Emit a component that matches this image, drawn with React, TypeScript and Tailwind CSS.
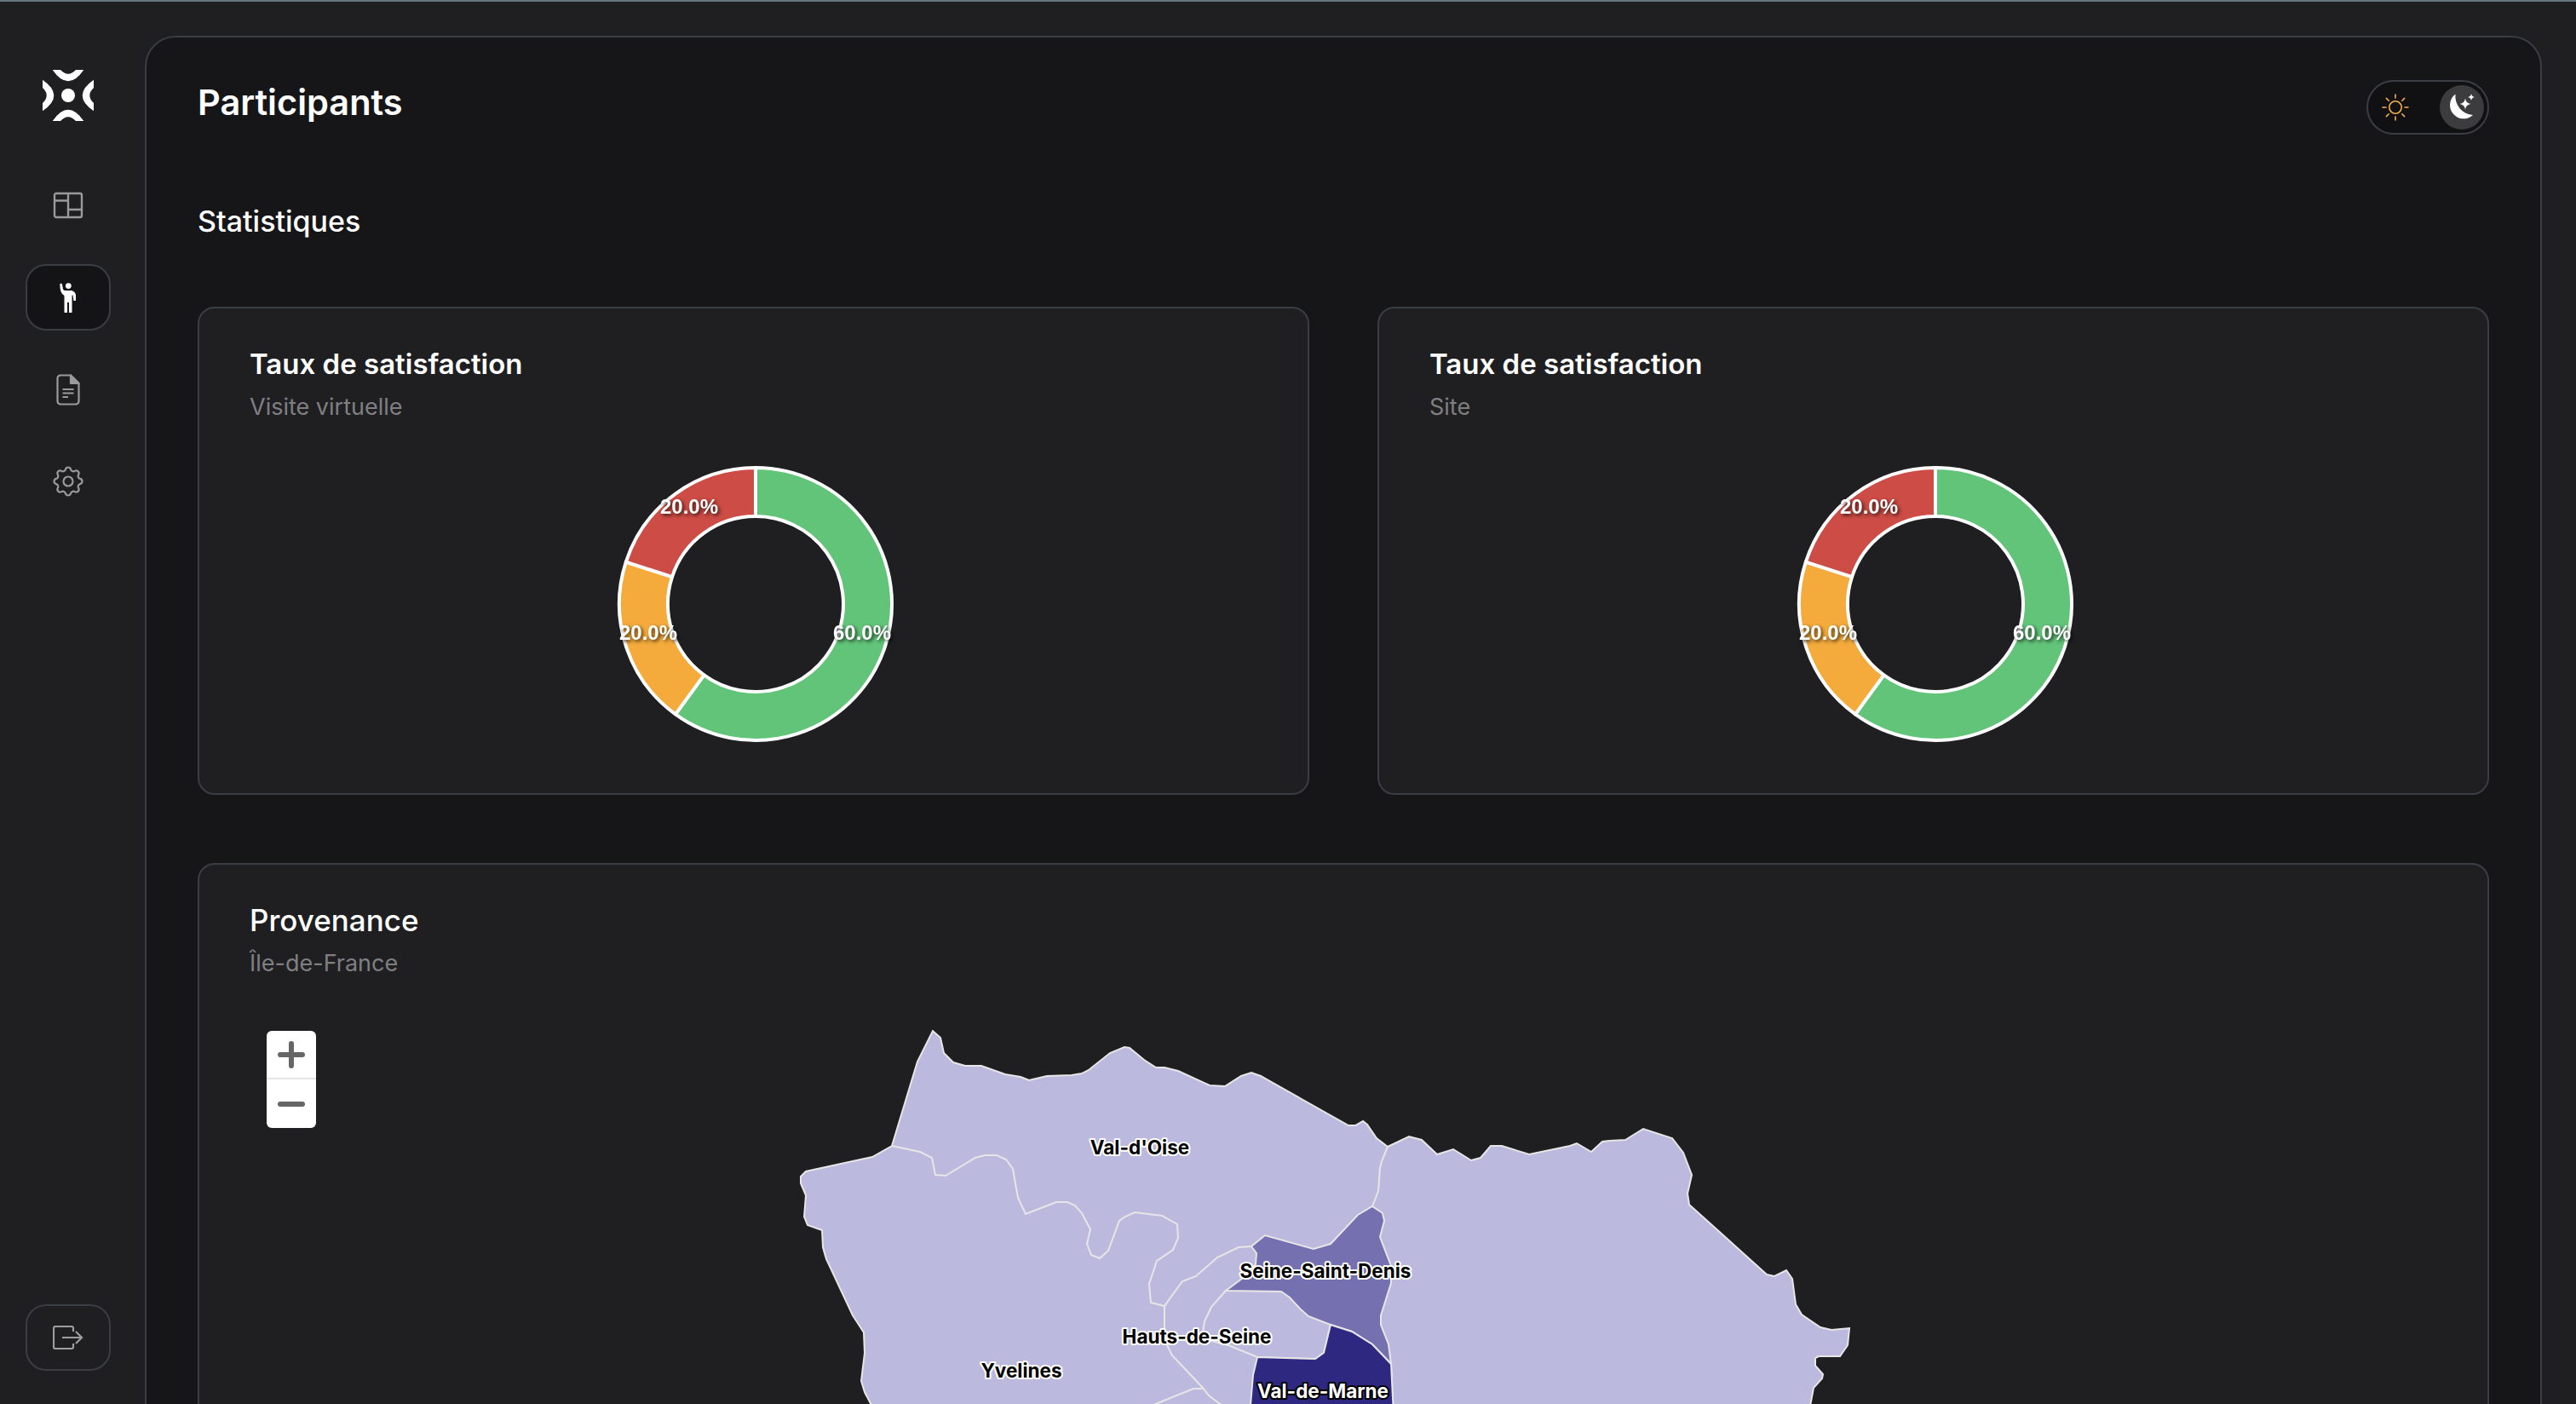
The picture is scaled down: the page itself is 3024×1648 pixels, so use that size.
import { TbSettings } from "react-icons/tb";

const segments = [
  { from: 0, to: 216, color: "#62c479" },
  { from: 216, to: 288, color: "#f4ab3c" },
  { from: 288, to: 360, color: "#cd4c45" },
];

const arcPoint = (r: number, deg: number) => {
  const a = (deg * Math.PI) / 180;
  return `${(170 + r * Math.sin(a)).toFixed(2)} ${(170 - r * Math.cos(a)).toFixed(2)}`;
};

const slicePath = (from: number, to: number) => {
  const large = to - from > 180 ? 1 : 0;
  return `M${arcPoint(160, from)} A160 160 0 ${large} 1 ${arcPoint(160, to)} L${arcPoint(103, to)} A103 103 0 ${large} 0 ${arcPoint(103, from)} Z`;
};

const Donut = () => (
  <svg width="340" height="340" viewBox="0 0 340 340" className="mx-auto block">
    {segments.map((s) => (
      <path key={s.from} d={slicePath(s.from, s.to)} fill={s.color} stroke="#ffffff" strokeWidth="4" strokeLinejoin="round" />
    ))}
    {[
      { x: 92, y: 55, t: "20.0%" },
      { x: 44, y: 203, t: "20.0%" },
      { x: 295, y: 203, t: "60.0%" },
    ].map((l) => (
      <text
        key={l.x}
        x={l.x}
        y={l.y}
        textAnchor="middle"
        dominantBaseline="central"
        fill="#ffffff"
        className="font-['Liberation_Sans',sans-serif] text-[24px] font-bold [filter:drop-shadow(2px_2px_2px_rgba(0,0,0,0.75))]"
      >
        {l.t}
      </text>
    ))}
  </svg>
);

const StatCard = ({ subtitle }: { subtitle: string }) => (
  <div className="h-[573px] rounded-[20px] border-2 border-[#3a3d42] bg-[#1f1f22] px-[59px] pt-[37px]">
    <h3 className="text-[33px] leading-[56px] font-semibold text-white">Taux de satisfaction</h3>
    <p className="mt-[3px] text-[27px] leading-[40px] text-[#7f7f82]">{subtitle}</p>
    <div className="mt-[41px] pl-[4px]">
      <Donut />
    </div>
  </div>
);

const Logo = () => (
  <svg width="60" height="60" viewBox="0 0 60 60" fill="#ffffff">
    <circle cx="30" cy="30" r="8" />
    {[0, 90, 180, 270].map((r) => (
      <path key={r} d="M11.7 0Q30 26.6 48.3 0L39 0Q30 9.4 21 0Z" transform={`rotate(${r} 30 30)`} />
    ))}
  </svg>
);

const LayoutIcon = () => (
  <svg width="36" height="32" viewBox="0 0 36 32" fill="none" stroke="#9a9a9a" strokeWidth="2.4">
    <rect x="2" y="2" width="32" height="28" rx="2" />
    <path d="M18 2V30M2 10.5H18M18 21H34" />
  </svg>
);

const PersonIcon = () => (
  <svg width="19" height="35" viewBox="0 0 19 35" fill="#ffffff" className="-ml-[2px]">
    <circle cx="10.3" cy="3.6" r="3.4" />
    <path d="M.3 1.5C.3.6 2.7.6 2.9 1.5L4 7.5 5.5 9H13C16 9 19 11.5 19 15V21H16.5L15.5 14.5H14.5V35H11V23H9V35H5.5V15C2.5 13 1.5 11 .7 7Z" />
  </svg>
);

const FileIcon = () => (
  <svg width="28" height="37" viewBox="0 0 28 37" fill="none" stroke="#9a9a9a" strokeWidth="2.2">
    <path d="M17 1.5H5A3.5 3.5 0 0 0 1.5 5V32A3.5 3.5 0 0 0 5 35.5H23A3.5 3.5 0 0 0 26.500 32V11Z" strokeLinejoin="round" />
    <path d="M17 1.500V11H26.500Z" fill="#9a9a9a" strokeLinejoin="round" />
    <path d="M7.500 18H20.500M7.500 22.500H20.500M7.500 27H14" />
  </svg>
);

const LogoutIcon = () => (
  <svg width="36" height="28" viewBox="0 0 36 28" fill="none" stroke="#9e9e9e" strokeWidth="2.2">
    <path d="M24 7V3A2 2 0 0 0 22 1H3A2 2 0 0 0 1 3V25A2 2 0 0 0 3 27H22A2 2 0 0 0 24 25V21" />
    <path d="M11 14H34M27 7L34 14L27 21" />
  </svg>
);

const SunIcon = () => (
  <svg width="32" height="32" viewBox="0 0 32 32" fill="none" stroke="#f5b04c" strokeWidth="1.600" strokeLinecap="round">
    <circle cx="16" cy="16" r="7.200" />
    <path d="M16 1V5M16 27V31M1 16H5M27 16H31M5.400 5.400L8.200 8.200M23.800 23.800L26.600 26.600M5.400 26.600L8.200 23.800M23.800 8.200L26.600 5.400" />
  </svg>
);

const MoonIcon = () => (
  <svg width="32" height="32" viewBox="2 0 32 32" fill="#ffffff" className="overflow-visible">
    <path d="M10.500.5A16 16 0 1 0 31 25A22 22 0 0 1 10.500.5Z" />
    <path d="M22 5.500Q22.800 11.200 28.500 12Q22.800 12.800 22 18.500Q21.200 12.800 15.500 12Q21.200 11.200 22 5.500Z" />
    <path d="M29 0Q29.500 3.500 33 4Q29.500 4.500 29 8Q28.500 4.500 25 4Q28.500 3.500 29 0Z" />
  </svg>
);

const silhouette =
  "1048,1344 1078,1245 1096,1209 1105,1217 1109,1235 1120,1246 1134,1250 1153,1250 1181,1260 1199,1263 1209,1267 1230,1262 1259,1261 1271,1259 1279,1255 1304,1235 1321,1228 1327,1229 1344,1243 1358,1252 1368,1252 1384,1256 1421,1273 1439,1274 1458,1262 1470,1258 1481,1262 1584,1320 1592,1320 1601,1315 1606,1319 1617,1335 1630,1345 1655,1333 1670,1337 1688,1354 1707,1348 1728,1361 1739,1358 1751,1344 1764,1344 1796,1354 1844,1344 1852,1341 1869,1351 1882,1339 1890,1338 1909,1337 1930,1324 1964,1335 1977,1352 1987,1378 1982,1400 1984,1413 2075,1495 2084,1497 2098,1490 2105,1500 2109,1530 2116,1542 2138,1557 2151,1560 2172,1558 2170,1578 2161,1591 2136,1591 2132,1593 2132,1602 2141,1612 2140,1617 2130,1628 2124,1660 1030,1660 1016,1633 1012,1620 1016,1587 1015,1563 1002,1543 971,1477 967,1463 966,1443 949,1437 945,1427 947,1402 941,1388 941,1380 947,1374 1025,1357";

const borders = [
  "1048,1344 1081,1351 1095,1358 1099,1378 1111,1379 1146,1358 1157,1355 1171,1355 1182,1360 1190,1371 1196,1405 1205,1424 1241,1410 1254,1410 1263,1414 1271,1423 1281,1442 1277,1459 1282,1472 1292,1476 1302,1467 1315,1432 1322,1427 1333,1422 1365,1426 1383,1436 1384,1452 1378,1466 1359,1479 1350,1506 1352,1528 1368,1532 1389,1503 1405,1497 1430,1475 1455,1463 1470,1462",
  "1630,1345 1623,1362 1621,1370 1619,1397 1612,1415",
  "1368,1532 1368,1560 1372,1580 1377,1590 1413,1628 1420,1637 1437,1650",
  "1350,1650 1402,1629 1413,1629",
  "1440,1514 1423,1533 1415,1550 1413,1563 1420,1572 1443,1578 1477,1592 1545,1594 1555,1587 1563,1554",
];

const seineSaintDenis =
  "1470,1462 1486,1449 1543,1465 1563,1459 1595,1425 1612,1415 1624,1423 1626,1432 1621,1451 1634,1485 1634,1505 1622,1543 1622,1554 1631,1577 1634,1600 1612,1577 1588,1562 1563,1554 1537,1544 1527,1535 1515,1522 1505,1515 1440,1514 1460,1499 1475,1483 1476,1470";

const valDeMarne = "1563,1554 1588,1562 1612,1577 1634,1600 1637,1660 1468,1660 1472,1613 1477,1592 1545,1594 1555,1587";

const mapLabels = [
  { x: 1339, y: 1345, t: "Val-d'Oise", fill: "#000000", halo: "#ffffff" },
  { x: 1557, y: 1490, t: "Seine-Saint-Denis", fill: "#000000", halo: "#ffffff" },
  { x: 1406, y: 1567, t: "Hauts-de-Seine", fill: "#000000", halo: "#ffffff" },
  { x: 1200, y: 1607, t: "Yvelines", fill: "#000000", halo: "#ffffff" },
  { x: 1554, y: 1631, t: "Val-de-Marne", fill: "#ffffff", halo: "#000000" },
];

const RegionMap = () => (
  <svg width="2568" height="800" viewBox="293 1189 2568 800" className="block">
    <polygon points={silhouette} fill="#bcb9df" stroke="#e6e6e6" strokeWidth="2" />
    {borders.map((b) => (
      <polyline key={b} points={b} fill="none" stroke="#e6e6e6" strokeWidth="2" />
    ))}
    <line x1="1634" y1="1600" x2="1637" y2="1660" stroke="#e6e6e6" strokeWidth="2" />
    <polygon points={seineSaintDenis} fill="#7570b0" stroke="#e6e6e6" strokeWidth="2" />
    <polygon points={valDeMarne} fill="#2e2880" stroke="#e6e6e6" strokeWidth="2" />
    {mapLabels.map((l) => (
      <text
        key={l.t}
        x={l.x}
        y={l.y}
        textAnchor="middle"
        dominantBaseline="central"
        fill={l.fill}
        stroke={l.halo}
        strokeWidth="4"
        strokeLinejoin="round"
        className="text-[22.5px] font-bold [paint-order:stroke]"
      >
        {l.t}
      </text>
    ))}
  </svg>
);

const ZoomControl = () => (
  <div className="absolute top-[20px] left-[21px] flex h-[114px] w-[58px] flex-col overflow-hidden rounded-[6px] bg-white">
    <div className="flex h-[57px] items-center justify-center border-b-2 border-[#e5e5e5]">
      <svg width="32" height="32" viewBox="0 0 32 32" stroke="#666666" strokeWidth="6" strokeLinecap="round">
        <path d="M3 16H29M16 3V29" />
      </svg>
    </div>
    <div className="flex h-[57px] items-center justify-center">
      <svg width="32" height="32" viewBox="0 0 32 32" stroke="#666666" strokeWidth="6" strokeLinecap="round">
        <path d="M3 16H29" />
      </svg>
    </div>
  </div>
);

export default function App() {
  return (
    <div className="flex h-[1648px] w-[3024px] overflow-hidden border-t-2 border-[#66757c] bg-[#1f1f22] font-[Inter,sans-serif]">
      <aside className="flex h-full w-[170px] shrink-0 flex-col items-center pr-[10px] pb-[39px]">
        <div className="mt-[80px]">
          <Logo />
        </div>
        <nav className="mt-[60px] flex flex-col gap-[30px]">
          <div className="flex h-[78px] w-[100px] items-center justify-center">
            <LayoutIcon />
          </div>
          <div className="flex h-[78px] w-[100px] items-center justify-center rounded-[24px] border-2 border-[#3a3d42] bg-[#141416]">
            <PersonIcon />
          </div>
          <div className="flex h-[78px] w-[100px] items-center justify-center">
            <FileIcon />
          </div>
          <div className="flex h-[78px] w-[100px] items-center justify-center text-[#9a9a9a]">
            <TbSettings size={44} strokeWidth={1.2} />
          </div>
        </nav>
        <button className="mt-auto flex h-[78px] w-[100px] items-center justify-center rounded-[24px] border-2 border-[#3a3d42]">
          <LogoutIcon />
        </button>
      </aside>
      <main className="mt-[40px] mr-[40px] h-[1800px] w-[2814px] shrink-0 rounded-t-[36px] border-2 border-[#3a3d42] bg-[#161618] px-[60px] pt-[50px]">
        <header className="flex h-[64px] items-center justify-between">
          <h1 className="pb-[13px] text-[41.5px] leading-[56px] font-semibold text-white">Participants</h1>
          <div className="flex h-[64px] w-[144px] items-center justify-between rounded-full border-2 border-[#3a3d42] bg-[#111113] pr-[4px] pl-[16px]">
            <SunIcon />
            <div className="flex h-[52px] w-[52px] items-center justify-center rounded-full bg-[#3c3c3e]">
              <MoonIcon />
            </div>
          </div>
        </header>
        <h2 className="mt-[78px] text-[34px] leading-[48px] font-medium text-white">Statistiques</h2>
        <div className="mt-[76px] grid grid-cols-2 gap-[80px]">
          <StatCard subtitle="Visite virtuelle" />
          <StatCard subtitle="Site" />
        </div>
        <section className="mt-[80px] rounded-[20px] border-2 border-[#3a3d42] bg-[#1f1f22] px-[59px] pt-[37px]">
          <h3 className="text-[35px] leading-[56px] font-medium text-white">Provenance</h3>
          <p className="mt-[3px] text-[27px] leading-[40px] text-[#7f7f82]">Île-de-France</p>
          <div className="relative -ml-px mt-[39px] h-[800px] w-[2568px]">
            <RegionMap />
            <ZoomControl />
          </div>
        </section>
      </main>
    </div>
  );
}
